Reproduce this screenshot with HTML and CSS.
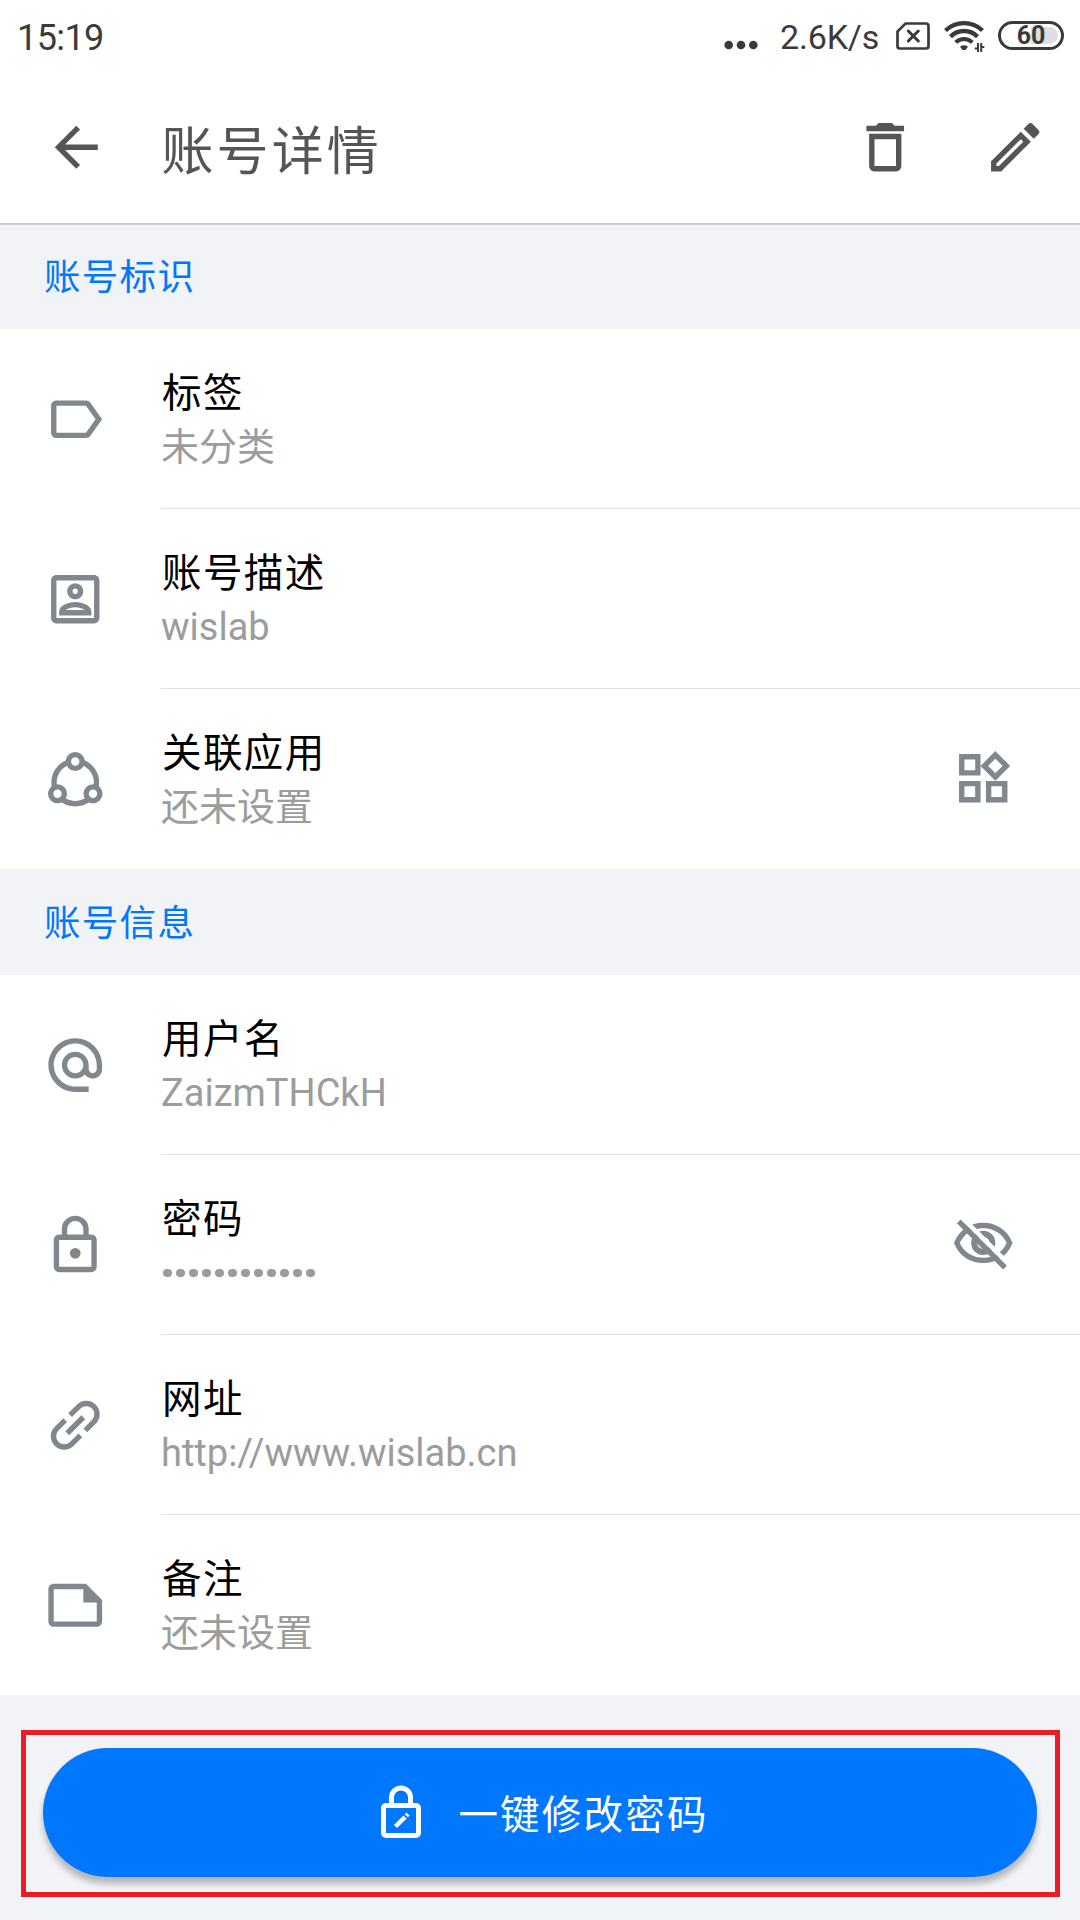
FILE: index.html
```
<!DOCTYPE html>
<html lang="zh-CN">
<head>
    <meta charset="UTF-8" />
    <meta name="viewport" content="width=device-width, initial-scale=1.0" />
    <title>账号详情</title>
    <link rel="stylesheet" href="styles.css">
</head>
<body>
    <div class="status-bar">
        <span class="time">15:19</span>
        <div class="status-icons">
            <svg class="dots" width="34" height="10" viewBox="0 0 34 10">
                <circle cx="4.7" cy="5" r="4.3" />
                <circle cx="17" cy="5" r="4.3" />
                <circle cx="29.3" cy="5" r="4.3" />
            </svg>
            <span class="speed">2.6K/s</span>
            <svg class="sim" width="34" height="28" viewBox="0 0 34 28" fill="none" stroke="#3a3a3a">
                <path d="M9.5 1.5H30a2.5 2.5 0 0 1 2.5 2.5v20a2.5 2.5 0 0 1-2.5 2.5H4A2.5 2.5 0 0 1 1.5 24V9.5z" stroke-width="2.7" />
                <path d="M12.3 9l10 10M22.3 9l-10 10" stroke-width="3" stroke-linecap="round" />
            </svg>
            <svg class="wifi" width="41" height="33" viewBox="0 0 41 33" fill="none" stroke="#3a3a3a">
                <path d="M1.5 10.5a27 27 0 0 1 37 0" stroke-width="4.4" />
                <path d="M6.5 16.7a19 19 0 0 1 27 0" stroke-width="4.4" />
                <path d="M11.7 22.400a12 12 0 0 1 16.600 0" stroke-width="4" />
                <path d="M16 26.700q4-2.800 8 0L21.500 30h-3z" fill="#3a3a3a" stroke="none" />
                <path d="M34 23v9M30.800 28.500h3.200M37.200 32v-9M40.300 27h-3.100" stroke-width="2" />
            </svg>
            <div class="battery"><span>60</span></div>
        </div>
    </div>

    <header>
        <svg class="icon" viewBox="0 0 24 24">
            <path d="M20 11H7.830l5.590-5.590L12 4l-8 8 8 8 1.410-1.410L7.830 13H20v-2z" />
        </svg>
        <h1>账号详情</h1>
        <div class="actions">
            <svg class="icon" viewBox="0 0 24 24">
                <path d="M6 19c0 1.100.900 2 2 2h8c1.100 0 2-.900 2-2V7H6v12zM8 9h8v10H8V9zm7.500-5l-1-1h-5l-1 1H5v2h14V4z" />
            </svg>
            <svg class="icon" viewBox="0 0 24 24">
                <path d="M3 17.250V21h3.750L17.810 9.940l-3.750-3.750L3 17.250zM5.920 19H5v-.920l9.060-9.060.920.920L5.920 19zM20.710 5.630l-2.340-2.340c-.200-.200-.450-.290-.710-.290s-.510.100-.700.290l-1.830 1.830 3.750 3.750 1.830-1.830c.390-.390.390-1.020 0-1.410z" />
            </svg>
        </div>
    </header>

    <h2 class="first">账号标识</h2>
    <div class="list">
        <div class="row">
            <svg class="icon" viewBox="0 0 24 24">
                <path d="M17.630 5.840C17.270 5.330 16.670 5 16 5H5c-1.100 0-2 .900-2 2v10c0 1.100.900 2 2 2h11c.670 0 1.270-.330 1.630-.840L22 12l-4.370-6.160zM16 17H5V7h11l3.550 5L16 17z" />
            </svg>
            <div class="row-body">
                <div>
                    <p class="label">标签</p>
                    <p class="value">未分类</p>
                </div>
            </div>
        </div>
        <div class="row">
            <svg class="icon" viewBox="0 0 24 24">
                <path d="M19 3H5c-1.100 0-2 .900-2 2v14c0 1.100.900 2 2 2h14c1.100 0 2-.900 2-2V5c0-1.100-.900-2-2-2zm0 16H5V5h14v14z" />
                <path d="M12 12c1.650 0 3-1.350 3-3s-1.350-3-3-3-3 1.350-3 3 1.350 3 3 3zm0-4c.550 0 1 .450 1 1s-.450 1-1 1-1-.450-1-1 .450-1 1-1zM18 16.580C18 14.080 14.030 13 12 13s-6 1.080-6 3.580V18h12v-1.420zM8.480 16c.740-.510 2.230-1 3.520-1s2.780.490 3.520 1H8.480z" />
            </svg>
            <div class="row-body">
                <div>
                    <p class="label">账号描述</p>
                    <p class="value">wislab</p>
                </div>
            </div>
        </div>
        <div class="row">
            <svg class="icon line" viewBox="0 0 24 24">
                <circle cx="12" cy="13.200" r="7.900" />
                <circle class="node" cx="12" cy="5.400" r="2.550" />
                <circle class="node" cx="5.400" cy="17.400" r="2.550" />
                <circle class="node" cx="18.600" cy="17.400" r="2.550" />
            </svg>
            <div class="row-body">
                <div>
                    <p class="label">关联应用</p>
                    <p class="value">还未设置</p>
                </div>
                <svg class="icon line" viewBox="0 0 24 24">
                    <path d="M4 4h6v6H4zM4 14h6v6H4zM14 14h6v6h-6zM16.500 3.300l4.100 4.100-4.100 4.100-4.100-4.100z" />
                </svg>
            </div>
        </div>
    </div>

    <h2>账号信息</h2>
    <div class="list">
        <div class="row">
            <svg class="icon" viewBox="0 0 24 24">
                <path d="M12 1.950c-5.520 0-10 4.480-10 10s4.480 10 10 10h5v-2h-5c-4.340 0-8-3.660-8-8s3.660-8 8-8 8 3.660 8 8v1.430c0 .790-.710 1.570-1.500 1.570s-1.500-.780-1.500-1.570v-1.430c0-2.760-2.240-5-5-5s-5 2.240-5 5 2.240 5 5 5c1.380 0 2.640-.560 3.540-1.470.650.890 1.770 1.470 2.960 1.470 1.970 0 3.500-1.600 3.500-3.570v-1.430c0-5.520-4.480-10-10-10zm0 13c-1.660 0-3-1.340-3-3s1.340-3 3-3 3 1.340 3 3-1.340 3-3 3z" />
            </svg>
            <div class="row-body">
                <div>
                    <p class="label">用户名</p>
                    <p class="value">ZaizmTHCkH</p>
                </div>
            </div>
        </div>
        <div class="row">
            <svg class="icon line" viewBox="0 0 24 24">
                <rect x="5" y="9" width="14" height="12" rx="1" />
                <path d="M8 9V6a4 4 0 0 1 8 0v3" />
                <circle class="fill" cx="12" cy="15" r="2" />
            </svg>
            <div class="row-body">
                <div>
                    <p class="label">密码</p>
                    <div class="value password">
                        <i></i><i></i><i></i><i></i><i></i><i></i><i></i><i></i><i></i><i></i><i></i><i></i>
                    </div>
                </div>
                <svg class="icon line" viewBox="0 0 24 24">
                    <path d="M2.200 11.500C3.800 7.500 7.500 5 12 5s8.200 2.500 9.800 6.500C20.200 15.500 16.500 18 12 18s-8.200-2.500-9.800-6.500z" />
                    <circle cx="12" cy="11.500" r="3.400" stroke-width="2.200" />
                    <path d="M5 2.900l16.500 16.500" stroke="#fff" stroke-width="1.700" />
                    <path d="M18.100 16l2.400 2.400-2.800 1z" fill="#fff" stroke="none" />
                    <path d="M2.900 3.500l17.200 17.200" />
                </svg>
            </div>
        </div>
        <div class="row">
            <svg class="icon line" viewBox="0 0 24 24">
                <g transform="rotate(-45 12 12)">
                    <path d="M13.300 8h4.500a4 4 0 0 1 0 8h-4.500M10.700 8H6.200a4 4 0 0 0 0 8h4.500M7.800 12h8.400" />
                </g>
            </svg>
            <div class="row-body">
                <div>
                    <p class="label">网址</p>
                    <p class="value">http://www.wislab.cn</p>
                </div>
            </div>
        </div>
        <div class="row">
            <svg class="icon" viewBox="0 0 24 24">
                <path d="M16 4H4c-1.100 0-2 .900-2 2v12.010c0 1.100.900 1.990 2 1.990h16c1.100 0 2-.900 2-2v-8l-6-6zM4 18.010V6h11v5h5v7.010H4z" />
            </svg>
            <div class="row-body">
                <div>
                    <p class="label">备注</p>
                    <p class="value">还未设置</p>
                </div>
            </div>
        </div>
    </div>

    <div class="highlight">
        <button class="btn">
            <svg width="60" height="60" viewBox="0 0 24 24" fill="none" stroke="#fff" stroke-width="2">
                <rect x="5" y="9" width="14" height="12" rx="1" />
                <path d="M8.200 9V5.800a3.800 3.800 0 0 1 7.600 0V9" />
                <path d="M9.800 17.400l3.800-3.800M14.100 13.100l.700-.700" stroke-width="1.800" />
            </svg>
            <span>一键修改密码</span>
        </button>
    </div>
</body>
</html>
```

FILE: styles.css
```
body {
    margin: 0;
    padding: 0;
    font-family: Roboto, 'Noto Sans CJK SC', sans-serif;
    background-color: #f1f3f7;
    min-height: 100vh;
}

h1, h2, p {
    margin: 0;
    font-weight: normal;
}

/* status bar */
.status-bar {
    background-color: white;
    color: #3a3a3a;
    height: 72px;
    padding: 0 16px 0 17px;
    display: flex;
    justify-content: space-between;
    align-items: flex-start;
}

.time {
    font-size: 36px;
    line-height: 42px;
    margin-top: 17px;
    letter-spacing: -0.6px;
}

.status-icons {
    display: flex;
    align-items: flex-start;
}

.dots {
    fill: #3a3a3a;
    margin: 40px 22px 0 0;
}

.speed {
    font-size: 34px;
    line-height: 40px;
    margin-top: 17px;
    margin-right: 17px;
    letter-spacing: -0.2px;
}

.sim {
    margin: 22px 14px 0 0;
}

.wifi {
    margin: 20px 13px 0 0;
}

.battery {
    box-sizing: border-box;
    width: 66px;
    height: 29px;
    margin-top: 21px;
    border: 3px solid #3a3a3a;
    border-radius: 15px;
    padding: 3px;
    background: linear-gradient(to right, #fff 50%, #dddee2 50%) content-box;
    display: flex;
    justify-content: center;
    align-items: center;
}

.battery span {
    font-size: 25px;
    font-weight: bold;
    line-height: 20px;
    margin-top: 1px;
}

/* title bar */
header {
    background-color: white;
    height: 151px;
    padding: 0 33px 0 44px;
    display: flex;
    align-items: center;
}

header .icon {
    fill: #555;
}

header h1 {
    color: #555;
    font-size: 52px;
    letter-spacing: 3.1px;
    margin-left: 53px;
}

.actions {
    display: flex;
    gap: 65px;
    margin-left: auto;
}

.icon {
    width: 64.5px;
    height: 64.5px;
    flex-shrink: 0;
    fill: #80888e;
}

.line {
    fill: none;
    stroke: #80888e;
    stroke-width: 2;
}

.node {
    fill: white;
}

.fill {
    fill: #80888e;
    stroke: none;
}

h2 {
    box-sizing: border-box;
    height: 106px;
    line-height: 109px;
    padding-left: 44px;
    font-size: 36.5px;
    letter-spacing: 1.3px;
    color: #0077ff;
}

.first {
    line-height: 106px;
    border-top: 2px solid #cbccd0;
}

/* rows */
.row {
    background-color: white;
    height: 180px;
    padding-left: 43px;
    display: flex;
    align-items: center;
}

.row-body {
    box-sizing: border-box;
    flex: 1;
    height: 180px;
    margin-left: 53.5px;
    padding-right: 64.5px;
    border-bottom: 1px solid #dfe0e4;
    display: flex;
    justify-content: space-between;
    align-items: center;
}

.row:last-child .row-body {
    border-bottom-color: white;
}

.label {
    font-size: 39.5px;
    line-height: 54px;
    padding: 3px 0 0 1px;
    letter-spacing: 1.4px;
    color: black;
}

.value {
    font-size: 38px;
    line-height: 53px;
    color: #9b9c9c;
}

.password {
    height: 53px;
    padding-left: 2px;
    display: flex;
    align-items: center;
    gap: 4.5px;
}

.password i {
    width: 8.5px;
    height: 8.5px;
    border-radius: 50%;
    background-color: #9b9c9c;
}

/* bottom button with red frame */
.highlight {
    box-sizing: border-box;
    width: 1039px;
    height: 167px;
    margin: 35px 0 0 21px;
    padding: 13px 17px;
    border: 5px solid #ed1c24;
}

.btn {
    width: 994px;
    height: 129px;
    border: none;
    border-radius: 65px;
    padding: 0;
    background-color: #0077ff;
    color: white;
    font-family: Roboto, 'Noto Sans CJK SC', sans-serif;
    font-size: 39.5px;
    letter-spacing: 2.2px;
    box-shadow: 0 7px 6px rgba(0, 0, 0, 0.25);
    display: flex;
    justify-content: center;
    align-items: center;
    gap: 27px;
}

.btn span {
    padding-bottom: 3px;
}
```
